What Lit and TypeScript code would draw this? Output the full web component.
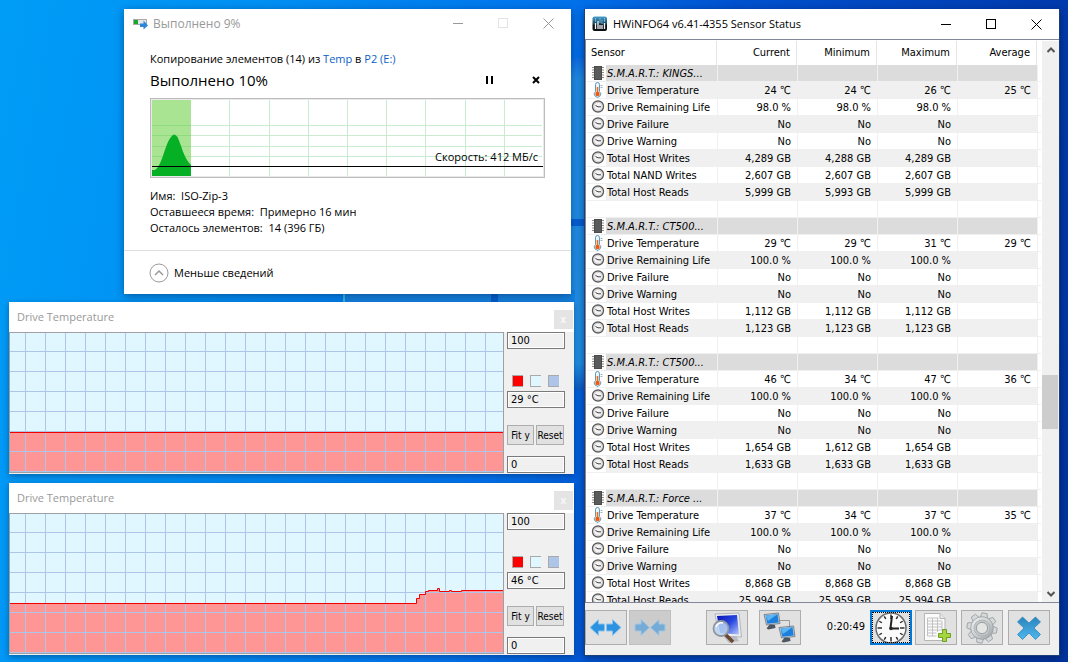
import { LitElement, html, css, svg, nothing } from "lit";
import { customElement, property } from "lit/decorators.js";

type Row = { kind: "group" | "temp" | "clock" | "blank"; name: string; values: string[] };

const group = (name: string): Row => ({ kind: "group", name, values: ["", "", "", ""] });
const temp = (...values: string[]): Row => ({ kind: "temp", name: "Drive Temperature", values });
const item = (name: string, a: string, b = a, c = a): Row => ({ kind: "clock", name, values: [a, b, c, ""] });
const blank: Row = { kind: "blank", name: "", values: ["", "", "", ""] };

const ROWS: Row[] = [
  group("S.M.A.R.T.: KINGS..."),
  temp("24 ℃", "24 ℃", "26 ℃", "25 ℃"),
  item("Drive Remaining Life", "98.0 %"),
  item("Drive Failure", "No"),
  item("Drive Warning", "No"),
  item("Total Host Writes", "4,289 GB", "4,288 GB", "4,289 GB"),
  item("Total NAND Writes", "2,607 GB"),
  item("Total Host Reads", "5,999 GB", "5,993 GB", "5,999 GB"),
  blank,
  group("S.M.A.R.T.: CT500..."),
  temp("29 ℃", "29 ℃", "31 ℃", "29 ℃"),
  item("Drive Remaining Life", "100.0 %"),
  item("Drive Failure", "No"),
  item("Drive Warning", "No"),
  item("Total Host Writes", "1,112 GB"),
  item("Total Host Reads", "1,123 GB"),
  blank,
  group("S.M.A.R.T.: CT500..."),
  temp("46 ℃", "34 ℃", "47 ℃", "36 ℃"),
  item("Drive Remaining Life", "100.0 %"),
  item("Drive Failure", "No"),
  item("Drive Warning", "No"),
  item("Total Host Writes", "1,654 GB", "1,612 GB", "1,654 GB"),
  item("Total Host Reads", "1,633 GB"),
  blank,
  group("S.M.A.R.T.: Force ..."),
  temp("37 ℃", "34 ℃", "37 ℃", "35 ℃"),
  item("Drive Remaining Life", "100.0 %"),
  item("Drive Failure", "No"),
  item("Drive Warning", "No"),
  item("Total Host Writes", "8,868 GB"),
  item("Total Host Reads", "25,994 GB", "25,959 GB", "25,994 GB"),
];

const shared = css`
  * { box-sizing: border-box; }
  button, input { font: inherit; color: inherit; margin: 0; border-radius: 0; }
  button { padding: 0; border: 0; background: none; display: grid; place-items: center; }
  svg { display: block; }
`;

const captionIcons = {
  min: svg`<path d="M0 5.5h10" />`,
  max: svg`<path d="M.5 .5h9v9h-9z" />`,
  close: svg`<path d="M.5 .5l10 10M10.5 .5l-10 10" shape-rendering="auto" />`,
};

const captionButton = (label: string, icon: unknown, faint = false) => html`
  <button class="cap ${faint ? "faint" : ""}" aria-label=${label}>
    <svg width="11" height="11" fill="none" stroke="currentColor" shape-rendering="crispEdges">${icon}</svg>
  </button>`;

@customElement("copy-dialog")
export class CopyDialog extends LitElement {
  static styles = [shared, css`
    :host { display: block; background: #fff; font: 12px/16px "Open Sans", "Noto Sans", sans-serif; color: #000; box-shadow: 0 2px 8px rgba(0, 20, 60, .45); }
    .title { display: flex; align-items: center; height: 29px; padding-left: 9px; color: #999; }
    .title .name { flex: 1; padding-left: 5px; }
    .cap { width: 45px; height: 29px; }
    .cap.faint { color: #e4e4e4; }
    .body { padding: 13px 26px 14px; font-size: 11px; }
    a { color: #0b5fc8; text-decoration: none; }
    .state { display: flex; align-items: center; height: 25px; margin-bottom: 6px; font-size: 15px; }
    .state .label { flex: 1; }
    .state button { width: 18px; height: 24px; }
    .state .last { margin-left: 28px; }
    .chart { position: relative; height: 80px; border: 1px solid #bcbcbc; padding: 1px; background: #e9e9e9; margin-bottom: 10px; }
    .chart svg { width: 100%; height: 76px; background: #fff; }
    .speed { position: absolute; right: 6px; top: 50px; }
    .more { display: flex; align-items: center; height: 44px; border-top: 1px solid #dfdfdf; padding: 0 25px; font-size: 11px; }
    .more button { display: flex; align-items: center; gap: 5px; }
  `];

  render() {
    const columns = [1, 2, 3, 4, 5, 6, 7, 8, 9].map((i) => i * 39 + Math.round(i * 0.2) - 0.5);
    return html`
      <div class="title">
        <svg width="15" height="12">
          <rect x=".5" y="1.5" width="13" height="5" fill="#e6e6e6" stroke="#a9a9a9" />
          <rect x="1" y="2" width="4" height="4" fill="#18a829" />
          <path d="M7 5.500h3.500v-3L15 7.500l-4.500 4v-2.500H7z" fill="#2b88d8" />
        </svg>
        <span class="name">Выполнено 9%</span>
        ${captionButton("Свернуть", captionIcons.min)}
        ${captionButton("Развернуть", captionIcons.max, true)}
        ${captionButton("Закрыть", captionIcons.close)}
      </div>
      <div class="body">
        <div>Копирование элементов (14) из <a href="#temp">Temp</a> в <a href="#p2">P2 (E:)</a></div>
        <div class="state">
          <span class="label">Выполнено 10%</span>
          <button aria-label="Пауза"><svg width="8" height="8"><path d="M0 0h2v8H0zM5 0h2v8H5z" /></svg></button>
          <button class="last" aria-label="Отмена"><svg width="8" height="8"><path d="M1 1l6 6M7 1L1 7" stroke="#000" stroke-width="2" /></svg></button>
        </div>
        <div class="chart">
          <svg viewBox="0 0 391 76" preserveAspectRatio="none">
            <rect width="39" height="76" fill="#a8e491" />
            ${columns.slice(1).map((x) => svg`<path d="M${x} 0V76" stroke="#c9ecd0" />`)}
            ${[25.5, 35.5, 46.5, 56.500].map((y) => svg`<path d="M39 ${y}H390" stroke="#c9ecd0" /><path d="M0 ${y}H39" stroke="#8fdb80" />`)}
            <path d="M0 76V70H3C10 66 13 44 19 37Q22 32 25.500 37C29 44 32 59 39 65V76Z" fill="#06b025" />
            <path d="M0 66.500H391" stroke="#000" />
          </svg>
          <span class="speed">Скорость: 412 МБ/с</span>
        </div>
        <div>Имя:&nbsp; ISO-Zip-3</div>
        <div>Оставшееся время:&nbsp; Примерно 16 мин</div>
        <div>Осталось элементов:&nbsp; 14 (396 ГБ)</div>
      </div>
      <div class="more">
        <button>
          <svg width="20" height="20" fill="none" stroke="#999">
            <circle cx="10" cy="10" r="9" /><path d="M6 12l4-4 4 4" stroke-width="1.500" />
          </svg>
          Меньше сведений
        </button>
      </div>`;
  }
}

@customElement("temp-graph")
export class TempGraph extends LitElement {
  @property() current = "";
  @property() trace = "";

  static styles = [shared, css`
    :host { display: block; background: #f0f0f0; font: 10px/13px "DejaVu Sans Condensed", "DejaVu Sans", sans-serif; color: #000; box-shadow: 0 2px 6px rgba(0, 20, 60, .4); }
    .title { display: flex; align-items: center; justify-content: space-between; height: 30px; padding: 0 1px 0 8px; background: #fff; color: #999; font: 11px/16px "Open Sans", "Noto Sans", sans-serif; }
    .title button { width: 19px; height: 19px; margin-top: 4px; background: #e4e4e4; color: #f7f7f7; font-size: 10px; font-weight: 700; }
    .body { display: flex; gap: 3px; padding-right: 9px; }
    .plot { flex: 1; min-width: 0; height: 141px; margin-bottom: 1px; border: 1px solid #a0a0a4; background: #e0f7ff; }
    .plot svg { width: 100%; height: 139px; }
    .side { width: 58px; display: flex; flex-direction: column; }
    input { display: block; width: 58px; height: 17px; padding: 0 3px; border: 1px solid #7a7a7a; background: #f0f0f0; outline: 1px solid #fff; outline-offset: -2px; font-size: 11px; }
    .swatches { display: flex; gap: 7px; margin: 26px 0 4px 5px; }
    .swatches button { width: 11px; height: 12px; border: 1px solid #a9a9a9; border-width: 1px 0 1px 1px; }
    .red { background: #f00; }
    .pale { background: #e0f7ff; }
    .blue { background: #adc5e8; }
    .actions { display: grid; grid-template-columns: 27px 28px; gap: 2px; margin: 17px 0 11px; }
    .actions button { height: 20px; border: 1px solid #adadad; background: #e1e1e1; white-space: nowrap; }
  `];

  render() {
    return html`
      <div class="title"><span>Drive Temperature</span><button aria-label="Close">x</button></div>
      <div class="body">
        <div class="plot">
          <svg viewBox="0 0 493 139" preserveAspectRatio="none">
            <defs>
              <pattern id="grid" x="15" y="18" width="20" height="20" patternUnits="userSpaceOnUse">
                <path d="M0 0H20V1H1V20H0Z" fill="#adc5e8" />
              </pattern>
            </defs>
            <path d="${this.trace}V139H0Z" fill="#ff9696" />
            <rect width="493" height="139" fill="url(#grid)" />
            <path d=${this.trace} fill="none" stroke="#f00000" />
          </svg>
        </div>
        <div class="side">
          <input aria-label="Maximum" value="100" />
          <div class="swatches">
            <button class="red" aria-label="Line colour"></button>
            <button class="pale" aria-label="Background colour"></button>
            <button class="blue" aria-label="Grid colour"></button>
          </div>
          <input aria-label="Current value" .value=${this.current} readonly />
          <div class="actions"><button>Fit y</button><button>Reset</button></div>
          <input aria-label="Minimum" value="0" />
        </div>
      </div>`;
  }
}

const ROW_ICONS = {
  group: html`<svg width="12" height="14"><path d="M0 1.500h12M0 4h12M0 6.500h12M0 9h12M0 11.500h12" stroke="#8a8a8a" /><rect x="2" width="8" height="14" fill="#4a4a4a" /><rect x="3" y="1" width="6" height="12" fill="#5a5a5a" /></svg>`,
  temp: html`<svg width="12" height="16"><path d="M3.500 2.500a2 2 0 0 1 4 0v7a3.200 3.200 0 1 1-4 0z" fill="#eef5fa" stroke="#5f97bb" /><path d="M5.500 5v7" stroke="#ee6a1c" stroke-width="1.600" /><circle cx="5.500" cy="12" r="2.200" fill="#ee5a10" /><path d="M8.500 3.500h2M8.500 5.500h2" stroke="#7aa3bd" stroke-width=".8" /></svg>`,
  clock: html`<svg width="14" height="14"><circle cx="7" cy="6.500" r="5.500" fill="#f3f3f3" stroke="#5c5c5c" stroke-width="1.400" /><circle cx="7" cy="6.500" r="4.200" fill="none" stroke="#c6c6c6" stroke-width=".8" /><path d="M4.500 5.500L7 6.800h3" fill="none" stroke="#444" /></svg>`,
  blank: nothing,
};

const arrow = (x: number, flip: boolean, o = 1) => svg`
  <path transform="translate(${x} 0) scale(${flip ? -1 : 1} 1)" opacity=${o}
    d="M0 6h6V1.500L14.500 9.500 6 17.500V13H0z" fill="#2d93e0" stroke="#8cc4ef" stroke-width="1" />`;

const monitor = (x: number, y: number) => svg`
  <g transform="translate(${x} ${y})">
    <path d="M6 11l5 1 .5 3-7 1.500-2-1z" fill="#4c5560" />
    <path d="M0 1.500L14.500 0 16 10.500 2.500 12z" fill="#c6ced6" stroke="#59636e" stroke-width=".7" />
    <path d="M1.500 2.500L13.500 1.200 14.700 9.600 3.300 10.800z" fill="#1b7fdd" />
    <path d="M1.500 2.500L13.500 1.200 4 8z" fill="#5ab4f5" />
  </g>`;

const gear = () => {
  const teeth = Array.from({ length: 8 }, (_, i) => i * 45 + 10);
  return svg`
    <defs><linearGradient id="metal" x2="1" y2="1"><stop offset="0" stop-color="#f2f3f3" /><stop offset=".55" stop-color="#c9cdcf" /><stop offset="1" stop-color="#979da0" /></linearGradient></defs>
    <g stroke="#979da0" stroke-width=".8">
      ${teeth.map((a) => svg`<path transform="rotate(${a} 16 16)" d="M12 7l1.500-6h5L20 7z" fill="#d6d9da" />`)}
      <circle cx="16" cy="16" r="11.300" fill="url(#metal)" />
      <circle cx="16" cy="16" r="8" fill="#c3c7c9" stroke="#aab0b2" />
      <circle cx="16" cy="16" r="5.600" fill="#e4e5e5" stroke="#8d9396" />
    </g>`;
};

@customElement("sensor-window")
export class SensorWindow extends LitElement {
  static styles = [shared, css`
    :host { display: flex; flex-direction: column; min-height: 0; background: #f0f0f0; border: solid #1b3f78; border-width: 0 1px 1px; font: 11px/14px "DejaVu Sans Condensed", "DejaVu Sans", sans-serif; color: #000; box-shadow: 0 2px 8px rgba(0, 10, 50, .5); }
    .title { display: flex; align-items: center; flex: none; height: 30px; padding-left: 7px; background: #fff; font: 11px/16px "Open Sans", "Noto Sans", sans-serif; }
    .title .name { flex: 1; padding-left: 5px; }
    .cap { width: 45px; height: 28px; }
    .view { display: flex; flex: 1; min-height: 0; border: solid #82879a; border-width: 1px 0 1px 1px; background: #fff; }
    .list { flex: 1; min-width: 0; overflow: hidden; padding: 1px 1px 0; }
    table { width: 100%; table-layout: fixed; border-collapse: separate; border-spacing: 0; }
    th, td { padding: 0; white-space: nowrap; overflow: hidden; text-align: right; font-weight: 400; }
    thead th { height: 24px; border-right: 1px solid #e5e5e5; padding-right: 6px; }
    thead th:first-child { text-align: left; padding-left: 4px; }
    thead th.tail { border: 0; }
    tbody th, tbody td { height: 17px; border-bottom: 1px solid #f0f0f0; border-left: 1px solid #f0f0f0; }
    tbody td { padding: 2px 6px 0 0; }
    tbody th { text-align: left; border-left: 0; }
    .odd td, .odd .label { background: #f0f0f0; }
    .group td, .group .label { background: #dcdcdc; }
    .group .label { font-style: italic; }
    tbody td.tail { background: #fff; padding: 0; }
    .cell { display: flex; height: 16px; }
    .icon { flex: none; width: 19px; display: grid; place-items: center; padding-left: 2px; overflow: hidden; }
    .label { flex: 1; padding: 2px 0 0 1px; }
    .c-val { width: 80px; }
    .c-tail { width: 4px; }
    .scroll { display: flex; flex-direction: column; flex: none; width: 17px; margin-top: 1px; background: #f0f0f0; }
    .scroll button { height: 17px; }
    .track { flex: 1; display: grid; grid-template-rows: 316fr 54fr 156fr; }
    .thumb { grid-row: 2; background: #cdcdcd; margin-right: 1px; }
    .tools { display: flex; align-items: center; flex: none; height: 52px; padding: 0 9px 3px 0; }
    .tools button { width: 42px; height: 35px; border: 1px solid #adadad; background: #e1e1e1; }
    .tools .off { background: #ccc; border-color: #bfbfbf; margin-left: 2px; }
    .tools .find { margin-left: 35px; }
    .tools .net { margin-left: 11px; }
    .tools .time { flex: 1; text-align: right; padding: 0 5px 2px 0; }
    .tools .focus { border: 2px solid #0078d7; outline: 1px dotted #000; outline-offset: -3px; }
    .tools .log { margin-left: 3px; }
    .tools .set { margin-left: 4px; }
    .tools .quit { margin-left: 5px; }
  `];

  private row(r: Row, i: number) {
    const tone = r.kind === "group" ? "group" : r.kind !== "blank" && i % 2 ? "odd" : "";
    return html`
      <tr class=${tone}>
        <th scope="row"><div class="cell"><span class="icon">${ROW_ICONS[r.kind]}</span><span class="label">${r.name}</span></div></th>
        ${r.values.map((v) => html`<td>${v}</td>`)}
        <td class="tail"></td>
      </tr>`;
  }

  render() {
    return html`
      <div class="title">
        <svg width="16" height="16">
          <defs><linearGradient id="logo" x2="0" y2="1"><stop offset="0" stop-color="#4aa3cf" /><stop offset=".5" stop-color="#1c4258" /><stop offset=".6" stop-color="#0b0f12" /></linearGradient></defs>
          <rect x=".5" y=".5" width="14.500" height="14.500" rx="2" fill="url(#logo)" />
          <path d="M3.500 7v6M6 5v8M8 9v4M10 9v4M12.500 7v6" stroke="#f2f7fa" stroke-width="1.300" />
          <path d="M3.500 2v4M8 2v5M10 4v4M12.500 2v4" stroke="#7fc0e0" stroke-width=".8" />
        </svg>
        <span class="name">HWiNFO64 v6.41-4355 Sensor Status</span>
        ${captionButton("Minimize", captionIcons.min)}
        ${captionButton("Maximize", captionIcons.max)}
        ${captionButton("Close", captionIcons.close)}
      </div>
      <div class="view">
        <div class="list">
          <table>
            <colgroup><col /><col class="c-val" /><col class="c-val" /><col class="c-val" /><col class="c-val" /><col class="c-tail" /></colgroup>
            <thead><tr><th>Sensor</th><th>Current</th><th>Minimum</th><th>Maximum</th><th>Average</th><th class="tail"></th></tr></thead>
            <tbody>${ROWS.map((r, i) => this.row(r, i))}</tbody>
          </table>
        </div>
        <div class="scroll">
          <button aria-label="Scroll up"><svg width="8" height="6" fill="none" stroke="#555" stroke-width="2"><path d="M.5 5L4 1.500 7.500 5" /></svg></button>
          <div class="track"><div class="thumb"></div></div>
          <button aria-label="Scroll down"><svg width="8" height="6" fill="none" stroke="#555" stroke-width="2"><path d="M.5 1L4 4.500 7.500 1" /></svg></button>
        </div>
      </div>
      <div class="tools">
        <button aria-label="Expand columns"><svg width="34" height="19">${arrow(15.5, true)}${arrow(17.5, false)}</svg></button>
        <button class="off" aria-label="Shrink columns"><svg width="32" height="19">${arrow(1, false, 0.55)}${arrow(31, true, 0.55)}</svg></button>
        <button class="find" aria-label="Summary">
          <svg width="32" height="32">
            <defs><linearGradient id="scr" x2="1" y2="1"><stop offset="0" stop-color="#0a12b4" /><stop offset=".5" stop-color="#2746e0" /><stop offset="1" stop-color="#b9c9fb" /></linearGradient></defs>
            <path d="M13 25l12-1 3 5-10 2z" fill="#b8bcc2" />
            <path d="M4 2L28 1l2.500 24L8 24z" fill="#e9ebee" stroke="#a5a9b0" stroke-width=".8" />
            <path d="M6 4L26 3l2 19.500L9 21z" fill="url(#scr)" />
            <path d="M14 22l8 8" stroke="#6b4630" stroke-width="3.500" />
            <circle cx="10" cy="16.500" r="7.500" fill="#bcd6f2" fill-opacity=".85" stroke="#8f979f" stroke-width="1.800" />
            <path d="M5 15q2-5 7-4" fill="none" stroke="#fff" stroke-width="1.500" />
          </svg>
        </button>
        <button class="net" aria-label="Remote sensors">
          <svg width="34" height="32"><path d="M17 8.500h9.500V16" fill="none" stroke="#9a9a9a" />${monitor(1, 1)}${monitor(16, 14)}</svg>
        </button>
        <span class="time">0:20:49</span>
        <button class="focus" aria-label="Reset clock">
          <svg width="34" height="32">
            <circle cx="17" cy="16" r="15" fill="#fafafa" stroke="#6a6a6a" stroke-width="1.500" />
            ${Array.from({ length: 12 }, (_, i) => svg`<path transform="rotate(${i * 30} 17 16)" d="M17 2.500v${i % 3 ? 3 : 4.500}" stroke="#222" stroke-width="1.400" />`)}
            <path d="M16.500 16L18 4" stroke="#222" stroke-width="2" /><path d="M16 16.500h9" stroke="#222" stroke-width="2" />
            <circle cx="17" cy="16.500" r="1.800" fill="#222" />
          </svg>
        </button>
        <button class="log" aria-label="Start logging">
          <svg width="30" height="31">
            <path d="M3.500 1.500h15.500l5 5V28.500H3.500z" fill="#fbfbfb" stroke="#b5b5b5" />
            <path d="M19 1.500v5h5" fill="#e8e8e8" stroke="#b5b5b5" />
            <path d="M6.500 6h11M6.500 9h14.500M6.500 12h14.500M6.500 15h14.500M6.500 18h14.500M6.500 21h9M6.500 24h9M6.500 6v18M11.500 6v18M16.500 6v14M21 9v9" stroke="#c2c2c2" fill="none" />
            <path d="M21.500 17.500h4v4h4v4h-4v4h-4v-4h-4v-4h4z" fill="#a5d63f" stroke="#6c9f23" />
          </svg>
        </button>
        <button class="set" aria-label="Settings"><svg width="32" height="32">${gear()}</svg></button>
        <button class="quit" aria-label="Close sensors">
          <svg width="26" height="26">
            <defs><linearGradient id="cross" x2="0" y2="1"><stop offset="0" stop-color="#2b83bd" /><stop offset="1" stop-color="#4db8ee" /></linearGradient></defs>
            <path d="M6.500 2L13 8l6.500-6L24.500 7 18 13l6.500 6.500-5 5L13 18l-6.500 6.500-5-5L8 13 1.500 7z" fill="url(#cross)" stroke="#2f87bb" stroke-width=".8" stroke-linejoin="round" />
          </svg>
        </button>
      </div>`;
  }
}

@customElement("app-root")
export class AppRoot extends LitElement {
  static styles = css`
    :host {
      display: grid; grid-template-columns: minmax(0, 565fr) minmax(0, 476fr); gap: 10px;
      box-sizing: border-box; height: 100vh; padding: 9px 8px 6px 9px; overflow: hidden;
      background:
        linear-gradient(#35c0e8 0 0) 343px 290px / 2px 12px no-repeat,
        linear-gradient(#0660cf 0 0) 491px 290px / 7px 12px no-repeat,
        linear-gradient(#1484e2 0 0) 345px 290px / 230px 12px no-repeat,
        linear-gradient(#0660d4 0 0) 560px 219px / 26px 7px no-repeat,
        linear-gradient(#0c6ee6, #1e8ce4 6%, #2090e6 92%, #0c5cc8) 560px 58px / 26px 332px no-repeat,
        linear-gradient(100deg, #009df6 0%, #0090f4 22%, #0072ec 48%, #0052d0 62%, #003cb0 88%, #00349e 100%);
    }
    .left { display: flex; flex-direction: column; min-width: 0; }
    .copy { margin: 0 3px 8px 115px; }
    .graph + .graph { margin-top: 9px; }
  `;

  render() {
    return html`
      <div class="left">
        <copy-dialog class="copy"></copy-dialog>
        <temp-graph class="graph" current="29 °C" trace="M0 99.5H493"></temp-graph>
        <temp-graph class="graph" current="46 °C"
          trace="M0 89.5H406.5V84.5H409.5V80.500H415.5V77.5H418.5V76.5H427.5V74.5H429.5V77.5H439.5V76.5H441.5V77.5H451.5V76.5H493"></temp-graph>
      </div>
      <sensor-window></sensor-window>`;
  }
}
